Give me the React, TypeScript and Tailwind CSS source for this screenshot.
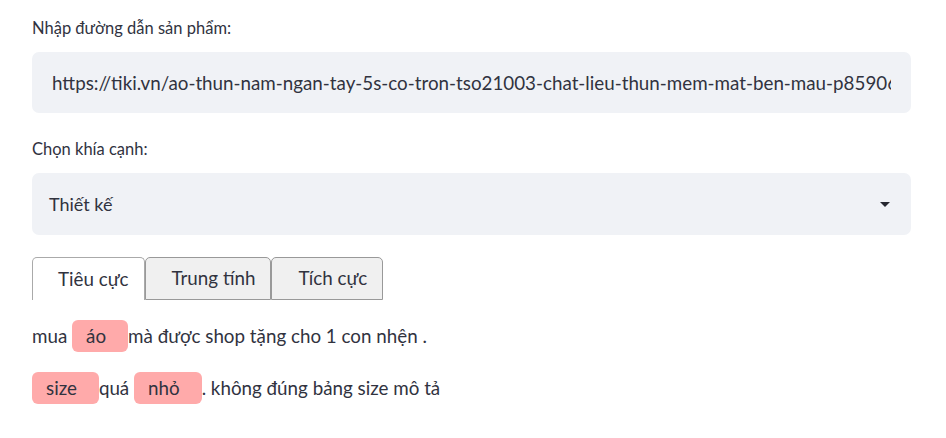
import React, { useState } from 'react';

const tabs = ['Tiêu cực', 'Trung tính', 'Tích cực'];

const Tag: React.FC<{ text: string }> = ({ text }) => (
  <span className="inline-flex h-[32px] items-center rounded-[6px] bg-[#ffaaaa] pl-[14px] pr-[22px]">{text}</span>
);

const App: React.FC = () => {
  const [url, setUrl] = useState(
    'https://tiki.vn/ao-thun-nam-ngan-tay-5s-co-tron-tso21003-chat-lieu-thun-mem-mat-ben-mau-p85906'
  );
  const [active, setActive] = useState(0);

  return (
    <div className="min-h-screen bg-white px-[32px] pt-[18px] text-[#31333f] font-['Lato',_'Liberation_Sans',_sans-serif]">
      <div className="w-[879px]">
        {/* url input */}
        <label className="block text-[16.5px] leading-[20px]">Nhập đường dẫn sản phẩm:</label>
        <input
          value={url}
          onChange={(e) => setUrl(e.target.value)}
          className="mt-[14px] block h-[61px] w-full rounded-[7px] bg-[#f0f2f6] px-[20px] text-[18.8px] outline-none"
        />

        {/* aspect select */}
        <label className="mt-[26px] block text-[16.5px] leading-[20px]">Chọn khía cạnh:</label>
        <div className="mt-[14px] flex h-[62px] items-center justify-between rounded-[7px] bg-[#f0f2f6] pl-[17px] pr-[21px] text-[18px]">
          <span>Thiết kế</span>
          <svg width="10" height="5" viewBox="0 0 10 5">
            <path d="M0 0h10L5 5z" fill="#262730" />
          </svg>
        </div>

        {/* tabs */}
        <div className="mt-[22px] flex">
          {tabs.map((t, i) => (
            <button
              key={t}
              onClick={() => setActive(i)}
              className={
                i === active
                  ? 'h-[43px] rounded-t-[5px] border border-b-0 border-[#aaaaaa] bg-white pl-[25px] pr-[15px] text-[18.8px]'
                  : 'h-[43px] rounded-t-[5px] border border-[#999999] bg-[#f0f0f0] pl-[26px] pr-[15px] text-[18.8px]'
              }
            >
              {t}
            </button>
          ))}
        </div>

        {/* annotated sentences */}
        <div className="mt-[20px] text-[18.8px]">
          <div className="flex h-[32px] items-center">
            mua&nbsp;<Tag text="áo" />mà được shop tặng cho 1 con nhện .
          </div>
          <div className="mt-[20px] flex h-[32px] items-center">
            <Tag text="size" />quá&nbsp;<Tag text="nhỏ" />. không đúng bảng size mô tả
          </div>
        </div>
      </div>
    </div>
  );
};

export default App;
